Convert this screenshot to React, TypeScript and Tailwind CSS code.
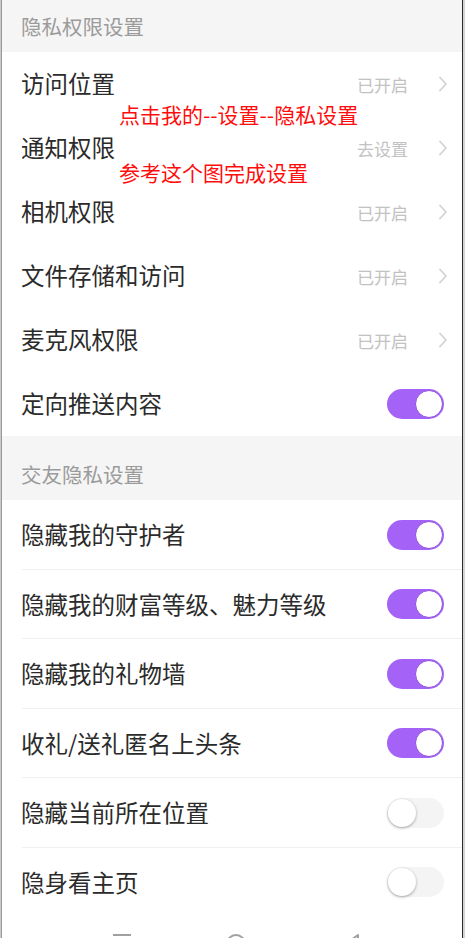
import React from 'react';

const font = { fontFamily: '"Noto Sans CJK SC", "Noto Sans", sans-serif' };

type Item = { label: string; status?: string; on?: boolean };

const permissions: Item[] = [
  { label: '访问位置', status: '已开启' },
  { label: '通知权限', status: '去设置' },
  { label: '相机权限', status: '已开启' },
  { label: '文件存储和访问', status: '已开启' },
  { label: '麦克风权限', status: '已开启' },
  { label: '定向推送内容', on: true },
];

const social: Item[] = [
  { label: '隐藏我的守护者', on: true },
  { label: '隐藏我的财富等级、魅力等级', on: true },
  { label: '隐藏我的礼物墙', on: true },
  { label: '收礼/送礼匿名上头条', on: true },
  { label: '隐藏当前所在位置', on: false },
  { label: '隐身看主页', on: false },
];

function Toggle({ on }: { on: boolean }) {
  return (
    <div
      className={
        on
          ? 'w-[57px] h-[30px] rounded-full bg-[#a462f6] flex items-center justify-end pr-px'
          : 'w-[57px] h-[30px] rounded-full bg-[#f4f4f4] flex items-center justify-start pl-px'
      }
    >
      <div
        className={
          on
            ? 'w-[28px] h-[28px] rounded-full bg-white border border-[#8e4fe0]'
            : 'w-[28px] h-[28px] rounded-full bg-white shadow-[0_1px_3px_rgba(0,0,0,0.35)]'
        }
      />
    </div>
  );
}

function Chevron() {
  return (
    <svg width="10" height="16" viewBox="0 0 10 16" fill="none">
      <path d="M2 1.5 L8 8 L2 14.5" stroke="#d2d2d2" strokeWidth="1.8" strokeLinecap="round" strokeLinejoin="round" />
    </svg>
  );
}

function Row({ item, tall, divider }: { item: Item; tall?: boolean; divider?: boolean }) {
  const hasStatus = item.status !== undefined;
  return (
    <div className={tall ? 'relative shrink-0 h-[69.5px] flex items-center pl-[19px]' : 'shrink-0 h-[64px] flex items-center pl-[19px]'}>
      <span className="flex-1 text-[23.5px] text-[#2b2b2b] leading-none">{item.label}</span>
      {hasStatus ? (
        <div className="flex items-center gap-[30px] pr-[14px]">
          <span className="text-[17px] text-[#c2c2c2] leading-none">{item.status}</span>
          <Chevron />
        </div>
      ) : (
        <div className="pr-[18px]">
          <Toggle on={!!item.on} />
        </div>
      )}
      {divider && <div className="absolute left-[20px] right-0 bottom-0 h-px bg-[#f0f0f0]" />}
    </div>
  );
}

export default function App() {
  return (
    <div className="w-[465px] h-[938px] overflow-hidden flex bg-white" style={font}>
      <div className="w-px bg-[#c9c9c9]" />
      <div className="w-px bg-[#9a9a9a]" />
      <div className="relative flex-1 flex flex-col">
        {/* 隐私权限 */}
        <div className="shrink-0 h-[52px] bg-[#f5f5f5] flex items-center pl-[19px]">
          <span className="text-[20.5px] text-[#9b9b9b] leading-none">隐私权限设置</span>
        </div>
        {permissions.map((p) => (
          <Row key={p.label} item={p} />
        ))}

        {/* 交友隐私 */}
        <div className="shrink-0 h-[64px] bg-[#f5f5f5] flex items-center pl-[19px] pt-[12px]">
          <span className="text-[20.5px] text-[#9b9b9b] leading-none">交友隐私设置</span>
        </div>
        {social.map((s, i) => (
          <Row key={s.label} item={s} tall divider={i < social.length - 1} />
        ))}

        {/* nav bar, mostly cut off */}
        <div className="shrink-0 h-[40px] flex items-start pt-[17px]">
          <div className="ml-[111px] w-[18px] h-[2px] bg-[#a0a0a0]" />
          <div className="ml-[95px] w-[20px] h-[20px] rounded-full border-2 border-[#a0a0a0]" />
          <svg className="ml-[98px]" width="18" height="18" viewBox="0 0 18 18" fill="none">
            <path d="M4 1 L15 9 L4 17 Z" stroke="#a0a0a0" strokeWidth="2" strokeLinejoin="round" transform="rotate(180 9 9)" />
          </svg>
        </div>

        {/* annotation */}
        <div className="absolute left-[117px] top-[104px] text-[21px] leading-none text-[#ff0d0d]">点击我的--设置--隐私设置</div>
        <div className="absolute left-[117px] top-[162px] text-[21px] leading-none text-[#ff0d0d]">参考这个图完成设置</div>
      </div>
      <div className="w-px bg-[#2a2a2a]" />
      <div className="w-[2px] bg-[#d4d4d4]" />
    </div>
  );
}
